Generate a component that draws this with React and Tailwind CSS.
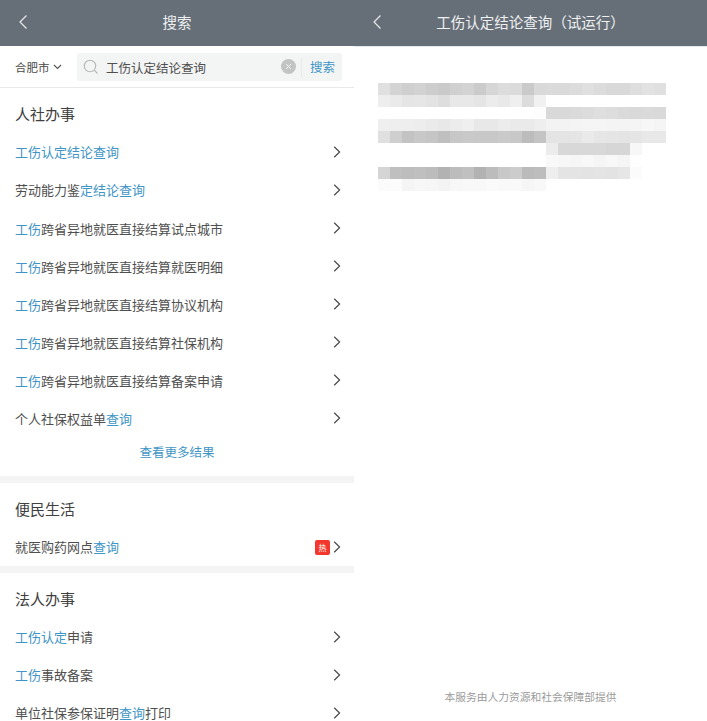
import React from 'react';

const cjk = { fontFamily: '"Noto Sans CJK SC", "Noto Sans", sans-serif' };

// 24 x 9 blurred block, grey value of each cell
const mosaic = [
  ['e0','d4','cf','d2','cd','ca','d0','d3','cb','d6','dc','db','ca','d9','da','da','dc','e0','dc','d9','d9','de','e2','e0'],
  ['ee','ea','e5','e6','e3','de','e8','e8','e5','ec','e9','ef','dc','f1','ff','ff','ff','ff','ff','ff','ff','ff','ff','ff'],
  ['ff','ff','ff','ff','ff','ff','ff','ff','ff','ff','ff','ff','ff','fd','d9','d9','da','dc','df','dd','da','d9','da','d9'],
  ['ef','ee','ee','ed','ea','e8','ec','ef','e8','e8','ec','ea','ea','ee','f3','f3','f4','f5','f5','f4','f4','f5','f7','f5'],
  ['e0','cf','c3','c8','c5','bf','c7','c9','c8','c8','ca','c8','bc','c4','e4','e4','e5','ea','e6','e5','e4','e5','e8','e8'],
  ['ff','ff','ff','ff','ff','ff','ff','ff','ff','ff','ff','ff','ff','ff','ec','d8','d8','d8','d8','d6','d6','f7','ff','ff'],
  ['ff','ff','ff','ff','ff','ff','ff','ff','ff','ff','ff','ff','ff','ff','f9','f7','f6','f8','f5','f8','f5','fe','ff','ff'],
  ['d5','bf','bd','bf','bc','b2','bc','c0','b2','bc','c8','cc','bb','bd','ee','e4','e4','e3','e4','e3','e6','fb','ff','ff'],
  ['fb','fc','f4','f7','f6','f3','f7','f8','f8','fa','f9','f9','f6','f8','ff','ff','ff','ff','ff','ff','ff','ff','ff','ff'],
];

const Chevron = () => (
  <svg width="10" height="14" viewBox="0 0 10 14" fill="none">
    <path d="M2.2 1.8 L7.6 7 L2.2 12.2" stroke="currentColor" strokeWidth="1.2" />
  </svg>
);

const BackArrow = () => (
  <svg width="10" height="16" viewBox="0 0 10 16" fill="none" className="text-[#e8eaec] -mt-[2px]">
    <path d="M8.5 1.5 L2 8 L8.5 14.5" stroke="currentColor" strokeWidth="1.2" />
  </svg>
);

// parts: plain strings are dark, {b: ''} are blue
const Row = ({ parts, hot, low }) => (
  <div className="h-[38px] pl-[15px] pr-3 flex items-center justify-between text-[13px] text-[#4f4f4f]">
    <span className={low ? 'block pt-[2px]' : 'block'}>
      {parts.map((p, i) =>
        typeof p === 'string' ? <span key={i}>{p}</span> : <span key={i} className="text-[#4095c6]">{p.b}</span>
      )}
    </span>
    <span className="flex items-center text-[#484848]">
      {hot && (
        <span className="w-[15px] h-[15px] mr-[2px] rounded-[2px] bg-[#f4372c] text-white text-[8px] leading-[15px] text-center">热</span>
      )}
      <Chevron />
    </span>
  </div>
);

const SectionTitle = ({ children }) => (
  <div className="h-[45px] pl-[15px] pt-[16px] text-[15px] leading-5 text-[#404040]">{children}</div>
);

const Gap = () => <div className="h-[7px] bg-[#f4f4f4]" />;

const Header = ({ title }) => (
  <div className="h-[46px] bg-[#666f78] flex items-center relative text-[14.5px] text-[#eef0f1] pl-[18px]">
    <BackArrow />
    <span className="absolute inset-x-0 top-[11px] leading-[22px] text-center">{title}</span>
  </div>
);

export default function App() {
  return (
    <div className="w-[707px] h-[721px] overflow-hidden flex bg-white" style={cjk}>
      {/* left: search results */}
      <div className="w-[354px] shrink-0">
        <Header title="搜索" />
        <div className="h-[42px] flex items-center pl-[15px] pr-3 border-b border-[#e9e9e9]">
          <span className="w-[62px] flex items-center gap-[3px] text-[11.5px] leading-4 pt-px text-[#4a4a4a]">
            合肥市
            <svg width="9" height="6" viewBox="0 0 9 6" fill="none">
              <path d="M1 1 L4.5 4.5 L8 1" stroke="#555" strokeWidth="1.1" />
            </svg>
          </span>
          <div className="flex-1 h-[28px] rounded-[3px] bg-[#f3f4f4] flex items-center pl-[6px] pr-[7px]">
            <svg width="16" height="16" viewBox="0 0 16 16" fill="none">
              <circle cx="7" cy="7" r="5.7" stroke="#b4b6b6" strokeWidth="1.1" />
              <path d="M11.2 11.2 L14.5 14.5" stroke="#b4b6b6" strokeWidth="1.1" />
            </svg>
            <span className="ml-[7px] flex-1 text-[12.5px] leading-5 pt-[2px] text-[#4f4f4f]">工伤认定结论查询</span>
            <span className="w-[15px] h-[15px] rounded-full bg-[#c2c3c3] flex items-center justify-center">
              <svg width="7" height="7" viewBox="0 0 7 7" fill="none">
                <path d="M1 1 L6 6 M6 1 L1 6" stroke="#f3f4f4" strokeWidth="1" />
              </svg>
            </span>
            <span className="ml-[5px] pl-2 border-l border-[#e8e9e9] text-[12.5px] leading-5 text-[#4095c6]">搜索</span>
          </div>
        </div>

        <SectionTitle>人社办事</SectionTitle>
        <Row parts={[{ b: '工伤认定结论查询' }]} />
        <Row parts={['劳动能力鉴', { b: '定结论查询' }]} />
        <Row low parts={[{ b: '工伤' }, '跨省异地就医直接结算试点城市']} />
        <Row low parts={[{ b: '工伤' }, '跨省异地就医直接结算就医明细']} />
        <Row low parts={[{ b: '工伤' }, '跨省异地就医直接结算协议机构']} />
        <Row low parts={[{ b: '工伤' }, '跨省异地就医直接结算社保机构']} />
        <Row low parts={[{ b: '工伤' }, '跨省异地就医直接结算备案申请']} />
        <Row low parts={['个人社保权益单', { b: '查询' }]} />
        <div className="h-[39px] pt-[6px] text-center text-[12.5px] leading-[18px] text-[#4095c6]">查看更多结果</div>
        <Gap />

        <SectionTitle>便民生活</SectionTitle>
        <Row parts={['就医购药网点', { b: '查询' }]} hot />
        <Gap />

        <SectionTitle>法人办事</SectionTitle>
        <Row parts={[{ b: '工伤认定' }, '申请']} />
        <Row parts={[{ b: '工伤' }, '事故备案']} />
        <Row parts={['单位社保参保证明', { b: '查询' }, '打印']} />
      </div>

      {/* right: result page */}
      <div className="flex-1 flex flex-col">
        <Header title="工伤认定结论查询（试运行）" />
        <div className="h-px bg-[#e6e9ec]" />
        <div className="mt-[36px] ml-[24px] grid grid-cols-[repeat(24,12px)] auto-rows-[12px] w-fit">
          {mosaic.flat().map((c, i) => (
            <div key={i} style={{ backgroundColor: `#${c}${c}${c}` }} />
          ))}
        </div>
        <div className="mt-auto h-[32px] text-center text-[10.75px] leading-4 text-[#9a9a9a]">本服务由人力资源和社会保障部提供</div>
      </div>
    </div>
  );
}
